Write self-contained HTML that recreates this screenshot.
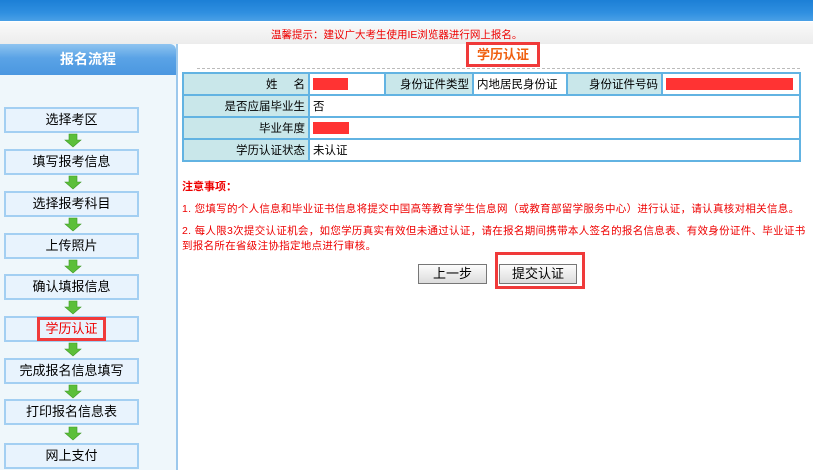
<!DOCTYPE html>
<html><head><meta charset="utf-8"><style>
*{margin:0;padding:0;box-sizing:border-box}
body{width:813px;height:470px;overflow:hidden;background:#fff;font-family:"Liberation Sans","Noto Sans CJK SC",sans-serif;font-size:12px;position:relative;color:#000}
.a{position:absolute}
.top{left:0;top:0;width:813px;height:21px;background:linear-gradient(#1c7fd6,#2f8fe0 60%,#4aa0e6)}
.bar{left:0;top:21px;width:813px;height:23px;background:linear-gradient(#fafafa,#ececec);border-top:1px solid #fff}
.side{left:0;top:44px;width:178px;height:426px;background:#eff7fb;border-right:2px solid #9cc8ec}
.st{left:0;top:44px;width:176px;height:31px;background:linear-gradient(#8fc4f0,#5aa3e6 45%,#4b97e0);border-radius:0 6px 0 0;color:#fff;font-weight:bold;font-size:14px;text-align:center;line-height:31px}
.step{left:4px;width:135px;height:26px;background:#e8f3fd;border:2px solid #a3cff2;text-align:center;line-height:22px;font-size:13px}
table{position:absolute;left:182px;top:72px;width:619px;border-collapse:collapse}
td{border:2px solid #62b3e2;height:22px;padding:0 3px;font-size:11.5px}
td.l{background:#c9e7ea;text-align:right}
.n{left:182px;color:#e00;font-size:10.5px;letter-spacing:0.3px;white-space:nowrap}
.btn{height:20px;border:1px solid #777;background:linear-gradient(#fcfcfc,#dcdcdc);text-align:center;line-height:18px;font-size:13px}
.rb{border:3px solid #f03a3a}
</style></head><body>
<div class="a top"></div>
<div class="a bar"></div>
<div class="a" style="left:271px;top:27px;color:#e00;font-size:10.5px">温馨提示：建议广大考生使用IE浏览器进行网上报名。</div>
<div class="a side"></div>
<div class="a st">报名流程</div>

<div class="a step" style="top:107px">选择考区</div>
<div class="a step" style="top:149px">填写报考信息</div>
<div class="a step" style="top:191px">选择报考科目</div>
<div class="a step" style="top:233px">上传照片</div>
<div class="a step" style="top:274px">确认填报信息</div>
<div class="a step" style="top:316px;color:#e00"><span class="rb" style="display:inline-block;padding:0 5px;line-height:18px;margin-top:-1px">学历认证</span></div>
<div class="a step" style="top:358px">完成报名信息填写</div>
<div class="a step" style="top:399px">打印报名信息表</div>
<div class="a step" style="top:443px">网上支付</div>

<svg class="a" style="left:0;top:0" width="178" height="470">
<g fill="#5cbf3a" stroke="#3e9a25" stroke-width="0.6">
<path d="M69 134h8v6h4l-8 7-8-7h4z"/>
<path d="M69 176h8v6h4l-8 7-8-7h4z"/>
<path d="M69 218h8v6h4l-8 7-8-7h4z"/>
<path d="M69 260h8v6h4l-8 7-8-7h4z"/>
<path d="M69 301h8v6h4l-8 7-8-7h4z"/>
<path d="M69 343h8v6h4l-8 7-8-7h4z"/>
<path d="M69 385h8v6h4l-8 7-8-7h4z"/>
<path d="M69 427h8v6h4l-8 7-8-7h4z"/>
</g></svg>

<div class="a rb" style="left:466px;top:42px;width:74px;height:25px;color:#f06010;font-weight:bold;font-size:13px;text-align:center;line-height:19px">学历认证</div>
<div class="a" style="left:197px;top:68px;width:603px;border-top:1px dashed #bbb"></div>

<table>
<tr><td class="l" style="width:126px">姓&nbsp;&nbsp;&nbsp;&nbsp;&nbsp;名</td><td style="width:76px"><span style="display:inline-block;width:35px;height:12px;background:#f33;vertical-align:middle"></span></td><td class="l" style="width:88px">身份证件类型</td><td style="width:94px">内地居民身份证</td><td class="l" style="width:95px">身份证件号码</td><td><span style="display:inline-block;width:127px;height:12px;background:#f33;vertical-align:middle"></span></td></tr>
<tr><td class="l">是否应届毕业生</td><td colspan="5">否</td></tr>
<tr><td class="l">毕业年度</td><td colspan="5"><span style="display:inline-block;width:36px;height:12px;background:#f33;vertical-align:middle"></span></td></tr>
<tr><td class="l">学历认证状态</td><td colspan="5">未认证</td></tr>
</table>

<div class="a n" style="top:178px;font-weight:bold;font-size:11px;letter-spacing:0">注意事项：</div>
<div class="a n" style="top:201px">1. 您填写的个人信息和毕业证书信息将提交中国高等教育学生信息网（或教育部留学服务中心）进行认证，请认真核对相关信息。</div>
<div class="a n" style="top:224px;line-height:15px">2. 每人限3次提交认证机会，如您学历真实有效但未通过认证，请在报名期间携带本人签名的报名信息表、有效身份证件、毕业证书<br>到报名所在省级注协指定地点进行审核。</div>

<div class="a btn" style="left:418px;top:264px;width:69px">上一步</div>
<div class="a rb" style="left:495px;top:252px;width:90px;height:37px"></div>
<div class="a btn" style="left:499px;top:264px;width:78px">提交认证</div>
</body></html>
